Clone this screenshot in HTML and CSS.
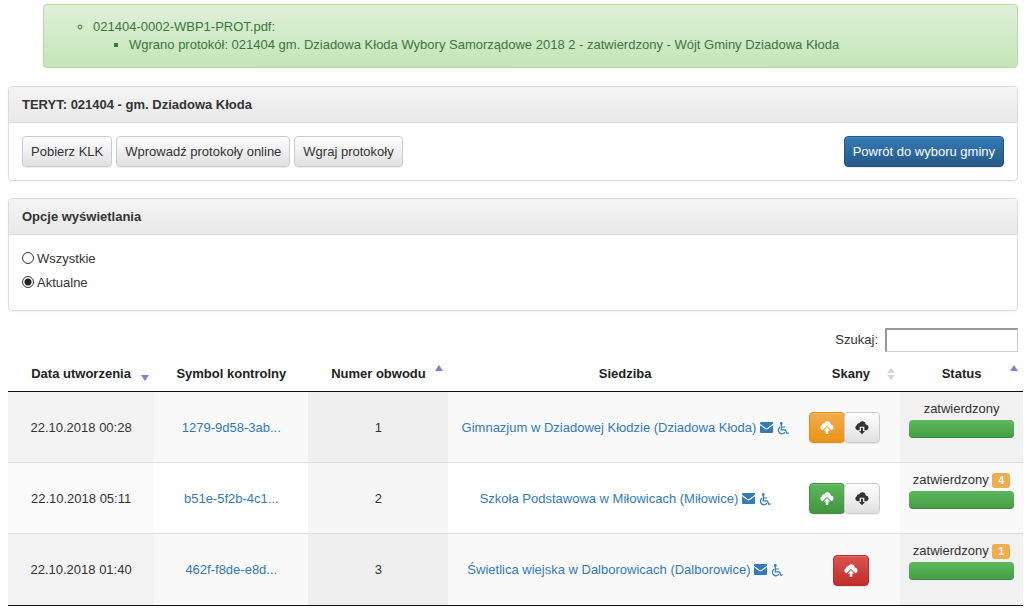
FILE: index.html
```
<!DOCTYPE html>
<html lang="pl">
<head>
<meta charset="utf-8">
<title>Protokoły</title>
<link rel="stylesheet" href="styles.css">
</head>
<body>
<svg class="sprite" aria-hidden="true">
  <symbol id="cloud-up" viewBox="0 0 14 14">
    <path d="M2.600 9.200A2.600 2.600 0 0 1 1.800 4.300 2 2 0 0 1 4.200 2.200a3.500 3.500 0 0 1 6.600 1.300A2.900 2.900 0 0 1 11.400 9.200L7 4.800z"/>
    <path d="M7 6 10.200 9.600H8.300V13H5.700V9.600H3.800z"/>
  </symbol>
  <symbol id="cloud-down" viewBox="0 0 14 14">
    <path d="M2.600 9.200A2.600 2.600 0 0 1 1.800 4.300 2 2 0 0 1 4.200 2.200a3.500 3.500 0 0 1 6.600 1.300A2.900 2.900 0 0 1 11.400 9.200H9.300V5.800H4.700V9.200z"/>
    <path d="M6 6.800H8V10H10L7 13.300 4 10H6z"/>
  </symbol>
  <symbol id="mail" viewBox="0 0 13 11">
    <path d="M1 0H12Q13 0 13 1V1.800L7.300 6Q6.500 6.500 5.700 6L0 1.800V1Q0 0 1 0zM0 3.200 5.200 7Q6.500 7.800 7.800 7L13 3.200V10Q13 11 12 11H1Q0 11 0 10z"/>
  </symbol>
  <symbol id="chair" viewBox="0 0 12 13">
    <circle cx="4.300" cy="1.400" r="1.300"/>
    <path d="M4.300 2V7.800H8.300L10 11.400 11.700 10.700M4.500 5H8M3 5.200A3.600 3.600 0 1 0 8 10.200" fill="none" stroke="currentColor" stroke-width="1.200"/>
  </symbol>
</svg>

<main class="page">
  <div class="alert" role="status">
    <ul class="files">
      <li>021404-0002-WBP1-PROT.pdf:
        <ul class="messages">
          <li>Wgrano protokół: 021404 gm. Dziadowa Kłoda Wybory Samorządowe 2018 2 - zatwierdzony - Wójt Gminy Dziadowa Kłoda</li>
        </ul>
      </li>
    </ul>
  </div>

  <section class="panel">
    <h2 class="panel-heading">TERYT: 021404 - gm. Dziadowa Kłoda</h2>
    <div class="panel-body toolbar">
      <button type="button" class="btn">Pobierz KLK</button>
      <button type="button" class="btn">Wprowadź protokoły online</button>
      <button type="button" class="btn">Wgraj protokoły</button>
      <button type="button" class="btn btn-primary push">Powrót do wyboru gminy</button>
    </div>
  </section>

  <section class="panel">
    <h2 class="panel-heading">Opcje wyświetlania</h2>
    <div class="panel-body options">
      <label class="option"><input type="radio" name="view">Wszystkie</label>
      <label class="option"><input type="radio" name="view" checked>Aktualne</label>
    </div>
  </section>

  <div class="filter">
    <label for="search">Szukaj:</label>
    <input type="search" id="search">
  </div>

  <table class="protocols">
    <colgroup>
      <col class="col-date"><col class="col-symbol"><col class="col-number"><col class="col-seat"><col class="col-scans"><col class="col-status">
    </colgroup>
    <thead>
      <tr>
        <th><button type="button" class="sort desc">Data utworzenia</button></th>
        <th>Symbol kontrolny</th>
        <th><button type="button" class="sort asc">Numer obwodu</button></th>
        <th>Siedziba</th>
        <th><button type="button" class="sort both">Skany</button></th>
        <th><button type="button" class="sort asc">Status</button></th>
      </tr>
    </thead>
    <tbody>
      <tr>
        <td>22.10.2018 00:28</td>
        <td><a href="#">1279-9d58-3ab...</a></td>
        <td>1</td>
        <td><a href="#">Gimnazjum w Dziadowej Kłodzie (Dziadowa Kłoda) <svg class="mail"><use href="#mail"/></svg> <svg class="chair"><use href="#chair"/></svg></a></td>
        <td><div class="group pair"><button type="button" class="btn btn-icon btn-warning" aria-label="Wyślij skan"><svg class="cloud"><use href="#cloud-up"/></svg></button><button type="button" class="btn btn-icon" aria-label="Pobierz skan"><svg class="cloud"><use href="#cloud-down"/></svg></button></div></td>
        <td class="status"><div class="state">zatwierdzony</div><div class="bar"></div></td>
      </tr>
      <tr>
        <td>22.10.2018 05:11</td>
        <td><a href="#">b51e-5f2b-4c1...</a></td>
        <td>2</td>
        <td><a href="#">Szkoła Podstawowa w Miłowicach (Miłowice) <svg class="mail"><use href="#mail"/></svg> <svg class="chair"><use href="#chair"/></svg></a></td>
        <td><div class="group pair"><button type="button" class="btn btn-icon btn-success" aria-label="Wyślij skan"><svg class="cloud"><use href="#cloud-up"/></svg></button><button type="button" class="btn btn-icon" aria-label="Pobierz skan"><svg class="cloud"><use href="#cloud-down"/></svg></button></div></td>
        <td class="status"><div class="state">zatwierdzony <span class="count">4</span></div><div class="bar"></div></td>
      </tr>
      <tr>
        <td>22.10.2018 01:40</td>
        <td><a href="#">462f-f8de-e8d...</a></td>
        <td>3</td>
        <td><a href="#">Świetlica wiejska w Dalborowicach (Dalborowice) <svg class="mail"><use href="#mail"/></svg> <svg class="chair"><use href="#chair"/></svg></a></td>
        <td><div class="group"><button type="button" class="btn btn-icon btn-danger" aria-label="Wyślij skan"><svg class="cloud"><use href="#cloud-up"/></svg></button></div></td>
        <td class="status"><div class="state">zatwierdzony <span class="count">1</span></div><div class="bar"></div></td>
      </tr>
    </tbody>
  </table>
</main>
</body>
</html>
```

FILE: styles.css
```
* { box-sizing: border-box; }

body {
  margin: 0;
  background: #fff;
  color: #333;
  font: 13px/18px "Liberation Sans", Arial, sans-serif;
}

button, input { font: inherit; color: inherit; }
ul { margin: 0; }
a { color: #337ab7; text-decoration: none; }
svg { fill: currentColor; }
.sprite { display: none; }

.page { padding: 4px 1px 0 8px; }

.alert {
  margin: 0 5px 18px 35px;
  padding: 13px 14px;
  border: 1px solid #b2dba1;
  border-radius: 4px;
  background: linear-gradient(#dff0d8, #c4e5b8);
  color: #3c763d;
}
.files { padding-left: 35px; list-style: circle; }
.messages { padding-left: 36px; list-style: square; }

.panel {
  margin: 0 5px 17px 0;
  border: 1px solid #ddd;
  border-radius: 4px;
  box-shadow: 0 1px 2px rgba(0, 0, 0, .05);
}
.panel-heading {
  margin: 0;
  padding: 9px 13px 8px;
  border-bottom: 1px solid #ddd;
  border-radius: 3px 3px 0 0;
  background: linear-gradient(#f5f5f5, #e8e8e8);
  font-size: 13px;
  line-height: 18px;
}
.panel-body { padding: 13px; }
.toolbar { display: flex; flex-wrap: wrap; gap: 4px; }
.push { margin-left: auto; }

.btn {
  padding: 5px 8px;
  border: 1px solid #ccc;
  border-radius: 4px;
  background: linear-gradient(#fff, #e0e0e0);
  line-height: 19px;
  box-shadow: inset 0 1px 0 rgba(255, 255, 255, .15), 0 1px 1px rgba(0, 0, 0, .075);
}
.btn-icon { padding: 5px 10px; }
.btn-primary { border-color: #245580; background: linear-gradient(#337ab7, #265a88); color: #fff; }
.btn-warning { border-color: #e38d13; background: linear-gradient(#f0ad4e, #eb9316); color: #fff; }
.btn-success { border-color: #3e8f3e; background: linear-gradient(#5cb85c, #419641); color: #fff; }
.btn-danger { border-color: #b92c28; background: linear-gradient(#d9534f, #c12e2a); color: #fff; }

.options { display: grid; gap: 6px; padding: 15px 13px 18px; }
.option { display: flex; gap: 3px; }
.option input {
  appearance: none;
  width: 12px;
  height: 12px;
  margin: 2px 0 0;
  border: 1px solid #333;
  border-radius: 50%;
  background: #fff;
}
.option input:checked { background: radial-gradient(circle, #222 3px, #fff 4px); }

.filter {
  display: flex;
  justify-content: flex-end;
  align-items: center;
  gap: 7px;
  margin-right: 5px;
}
.filter input {
  width: 133px;
  height: 24px;
  padding: 1px 4px;
  border: 1px solid #ccc;
  border-top: 2px solid #999;
  border-left: 2px solid #999;
  background: #fff;
}

.protocols {
  width: 100%;
  margin-top: 4px;
  border-collapse: separate;
  border-spacing: 0;
  border-bottom: 1px solid #111;
  table-layout: fixed;
  text-align: center;
}
.col-date { width: 14.4%; }
.col-symbol { width: 15.2%; }
.col-number { width: 13.8%; }
.col-seat { width: 34.8%; }
.col-scans { width: 9.7%; }

th {
  position: relative;
  height: 36px;
  padding: 0;
  border-bottom: 1px solid #111;
  color: #222;
}
.sort { width: 100%; padding: 0; border: 0; background: none; font-weight: bold; }
.sort::before, .sort::after {
  position: absolute;
  right: 5px;
  border: 4px solid transparent;
  content: "";
}
.sort.asc::before { top: 9px; border-width: 0 4px 6px; border-bottom-color: #7b83d0; }
.sort.desc::after { top: 19px; border-width: 6px 4px 0; border-top-color: #7b83d0; }
.sort.both::before { top: 12px; border-width: 0 4px 5px; border-bottom-color: #d5d5d5; }
.sort.both::after { top: 19px; border-width: 5px 4px 0; border-top-color: #d5d5d5; }
.sort.asc::after, .sort.desc::before { display: none; }

td {
  height: 71px;
  padding: 1px 8px 0;
  border-bottom: 1px solid #ddd;
  vertical-align: middle;
}
tbody tr:last-child td { border-bottom: 0; }
tr:nth-child(odd) td { background: #f9f9f9; }
tr:nth-child(odd) td:nth-child(1) { background: #f3f3f3; }
tr:nth-child(odd) td:nth-child(3) { background: #efefef; }
tr:nth-child(odd) td:nth-child(6) { background: #f1f1f1; }
tr:nth-child(even) td { background: #fff; }
tr:nth-child(even) td:nth-child(1) { background: #fafafa; }
tr:nth-child(even) td:nth-child(3) { background: #f5f5f5; }
tr:nth-child(even) td:nth-child(6) { background: #f9f9f9; }

.mail { width: 13px; height: 11px; vertical-align: -1px; }
.chair { width: 12px; height: 13px; vertical-align: -3px; }
.cloud { display: block; width: 14px; height: 14px; margin: 3px 0 2px; }

.group { display: flex; justify-content: center; }
.pair { margin-right: 12px; }
.group .btn + .btn { margin-left: -1px; }

td.status { padding: 8px 9px; vertical-align: top; }
.count {
  display: inline-block;
  width: 18px;
  border-radius: 3px;
  background: #f0ad4e;
  color: #fff;
  font-size: 10px;
  font-weight: bold;
  line-height: 15px;
}
.bar {
  height: 18px;
  margin-top: 2px;
  border-radius: 4px;
  background: linear-gradient(#5cb85c, #449d44);
  box-shadow: inset 0 -1px 0 rgba(0, 0, 0, .15);
}
```
